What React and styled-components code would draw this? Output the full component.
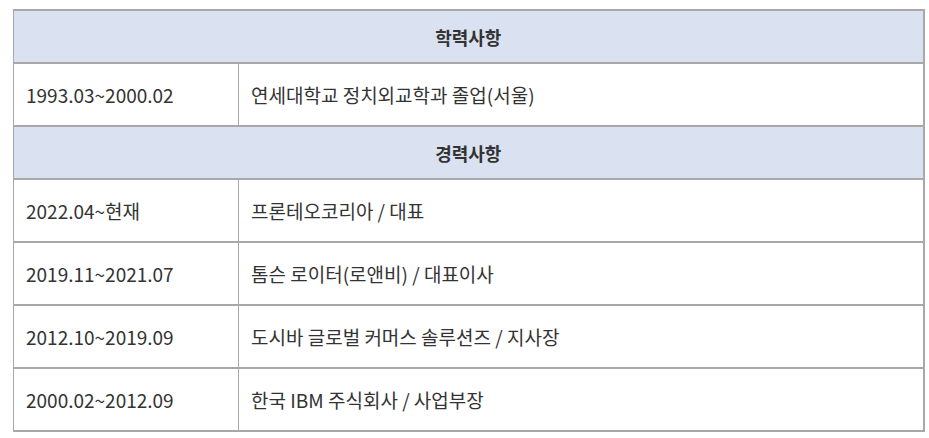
import React from "react";
import styled, { createGlobalStyle } from "styled-components";

const Global = createGlobalStyle`
  html, body { margin: 0; padding: 0; background: #fff; }
  body { font-family: "Noto Sans CJK KR", "Noto Sans", sans-serif; color: #333; }
`;

const Wrap = styled.div`
  padding: 9px 7px 0 13px;
`;

const Table = styled.table`
  width: 910px;
  border-collapse: collapse;
  table-layout: fixed;
  color: #333;
`;

const Col = styled.col`
  width: ${(p) => p.$w}px;
`;

const HeadCell = styled.th`
  height: 51px;
  padding: 0;
  background: #dae2f2;
  border-top: 2px solid #a8a8a8;
  border-bottom: 2px solid #a8a8a8;
  border-left: 1px solid #a8a8a8;
  border-right: 2px solid #a8a8a8;
  font-size: 18px;
  font-weight: 700;
  text-align: center;
  vertical-align: middle;
`;

const Cell = styled.td`
  height: 61px;
  padding: 0 12px;
  background: #fff;
  border-top: 2px solid #a8a8a8;
  border-bottom: 2px solid #a8a8a8;
  border-left: 1px solid #a8a8a8;
  border-right: ${(p) => (p.$last ? "2px" : "1px")} solid #a8a8a8;
  font-size: 19px;
  font-weight: 400;
  text-align: left;
  vertical-align: middle;
  white-space: nowrap;
`;

const education = [["1993.03~2000.02", "연세대학교 정치외교학과 졸업(서울)"]];
const career = [
  ["2022.04~현재", "프론테오코리아 / 대표"],
  ["2019.11~2021.07", "톰슨 로이터(로앤비) / 대표이사"],
  ["2012.10~2019.09", "도시바 글로벌 커머스 솔루션즈 / 지사장"],
  ["2000.02~2012.09", "한국 IBM 주식회사 / 사업부장"],
];

const Section = ({ title, rows }) => (
  <>
    <tr>
      <HeadCell colSpan={2}>{title}</HeadCell>
    </tr>
    {rows.map(([period, desc]) => (
      <tr key={period}>
        <Cell>{period}</Cell>
        <Cell $last>{desc}</Cell>
      </tr>
    ))}
  </>
);

export default function App() {
  return (
    <Wrap>
      <Global />
      <Table>
        <colgroup>
          <Col $w={225} />
          <Col $w={685} />
        </colgroup>
        <tbody>
          <Section title="학력사항" rows={education} />
          <Section title="경력사항" rows={career} />
        </tbody>
      </Table>
    </Wrap>
  );
}
